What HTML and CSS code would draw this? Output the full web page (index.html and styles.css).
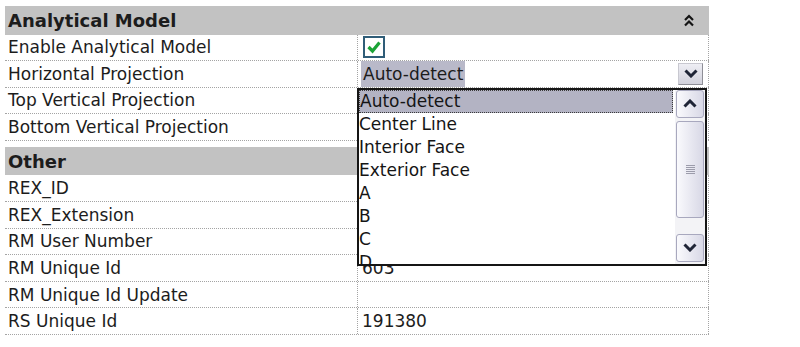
FILE: index.html
```html
<!DOCTYPE HTML>
<html>
	<head>
		<title>
			Properties
		</title>
		<meta name="viewport" content="width=device-width, initial-scale=1.0">
		<link rel="stylesheet" href="styles.css">
	</head>
	<body>
		<div class="grid">
			<!-- Analytical Model group -->
			<div class="group">
				<div class="groupHead">
					<span>Analytical Model</span>
					<svg class="collapse" width="10" height="13" viewBox="0 0 10 13">
						<polyline points="1,6 5,2 9,6" fill="none" stroke="#141414" stroke-width="2.2"/>
						<polyline points="1,11.5 5,7.5 9,11.5" fill="none" stroke="#141414" stroke-width="2.2"/>
					</svg>
				</div>
				<div class="row">
					<div class="name">Enable Analytical Model</div>
					<div class="value">
						<span class="check">
							<svg width="18" height="18" viewBox="0 0 18 18">
								<polyline points="3.5,9 7.5,13 14.5,4.5" fill="none" stroke="#1ba336" stroke-width="3.2"/>
							</svg>
						</span>
					</div>
				</div>
				<div class="row">
					<div class="name">Horizontal Projection</div>
					<div class="value combo">
						<span class="current">Auto-detect</span>
						<span class="dropBtn">
							<svg width="14" height="9" viewBox="0 0 14 9">
								<polyline points="1.5,1.5 7,7 12.5,1.5" fill="none" stroke="#1f2536" stroke-width="3"/>
							</svg>
						</span>
						<!-- open list of the combo -->
						<div class="dropList">
							<div class="items">
								<div class="item selected">Auto-detect</div>
								<div class="item">Center Line</div>
								<div class="item">Interior Face</div>
								<div class="item">Exterior Face</div>
								<div class="item">A</div>
								<div class="item">B</div>
								<div class="item">C</div>
								<div class="item">D</div>
							</div>
							<div class="scroll">
								<span class="sbtn">
									<svg width="14" height="9" viewBox="0 0 14 9">
										<polyline points="1.5,7.5 7,2 12.5,7.5" fill="none" stroke="#1f2536" stroke-width="3"/>
									</svg>
								</span>
								<span class="thumb">
									<span class="grip"></span>
								</span>
								<span class="track"></span>
								<span class="sbtn">
									<svg width="14" height="9" viewBox="0 0 14 9">
										<polyline points="1.5,1.5 7,7 12.5,1.5" fill="none" stroke="#1f2536" stroke-width="3"/>
									</svg>
								</span>
							</div>
						</div>
					</div>
				</div>
				<div class="row">
					<div class="name">Top Vertical Projection</div>
					<div class="value"></div>
				</div>
				<div class="row">
					<div class="name">Bottom Vertical Projection</div>
					<div class="value"></div>
				</div>
			</div>
			<!-- Other group -->
			<div class="group">
				<div class="groupHead">
					<span>Other</span>
				</div>
				<div class="row">
					<div class="name">REX_ID</div>
					<div class="value"></div>
				</div>
				<div class="row">
					<div class="name">REX_Extension</div>
					<div class="value"></div>
				</div>
				<div class="row">
					<div class="name">RM User Number</div>
					<div class="value"></div>
				</div>
				<div class="row">
					<div class="name">RM Unique Id</div>
					<div class="value">603</div>
				</div>
				<div class="row">
					<div class="name">RM Unique Id Update</div>
					<div class="value"></div>
				</div>
				<div class="row">
					<div class="name">RS Unique Id</div>
					<div class="value">191380</div>
				</div>
			</div>
		</div>
	</body>
</html>
```

FILE: styles.css
```css
body {
	margin:0;
	background-color:white;
	color:#1c1c1c;
	font-family:"DejaVu Sans", Tahoma, sans-serif;
	font-size:17px;
}

.grid {
	width:704px;
	margin-left:5px;
}
.group {
	margin-top:6px;
}
.groupHead {
	height:28.5px;
	box-sizing:border-box;
	padding:0 15px 0 3px;
	background-color:#c2c2c2;
	font-size:18px;
	font-weight:bold;
	display:flex;
	align-items:center;
	justify-content:space-between;
}
.collapse {
	display:block;
}

.row {
	height:26.6px;
	box-sizing:border-box;
	border-bottom:1px dotted #a4a4a4;
	display:flex;
}
.name {
	width:352px;
	padding-left:3px;
	box-sizing:border-box;
	display:flex;
	align-items:center;
	white-space:nowrap;
}
.value {
	flex:1;
	padding-left:4px;
	border-left:1px dotted #a4a4a4;
	border-right:1px dotted #a4a4a4;
	display:flex;
	align-items:center;
	position:relative;
	white-space:nowrap;
}

/* checkbox */
.check {
	width:22px;
	height:22px;
	box-sizing:border-box;
	margin-left:1px;
	border:2px solid #2f5d78;
	background-color:white;
	display:flex;
	align-items:center;
	justify-content:center;
}

/* combo box */
.combo {
	align-items:stretch;
	padding-left:3px;
}
.current {
	padding:0 2px;
	background-color:#b9b9c9;
	display:flex;
	align-items:center;
}
.dropBtn {
	width:25px;
	height:22px;
	box-sizing:border-box;
	margin:0 5px 0 auto;
	align-self:center;
	border:1px solid #c8c8d0;
	border-right-color:#8e8e96;
	border-bottom-color:#8e8e96;
	background:linear-gradient(#eeeef4, #d2d2dc);
	display:flex;
	align-items:center;
	justify-content:center;
}

.dropList {
	position:absolute;
	left:-1px;
	top:calc(100% + 1px);
	width:350px;
	height:178px;
	box-sizing:border-box;
	border:2px solid #151515;
	background-color:white;
	display:flex;
	z-index:2;
}
.items {
	flex:1;
	overflow:hidden;
	padding-right:2px;
}
.item {
	height:23px;
	line-height:23px;
	color:#151515;
}
.selected {
	line-height:21px;
	box-sizing:border-box;
	border:1px dotted #3a3a3a;
	background-color:#b3b3c3;
}

.scroll {
	width:30px;
	box-sizing:border-box;
	padding:0 1px 2px 1px;
	background-color:#f3f3f6;
	display:flex;
	flex-direction:column;
}
.sbtn {
	height:28px;
	box-sizing:border-box;
	border:1px solid #a8a8be;
	border-radius:3px;
	background:linear-gradient(to right, #fafafd, #d8d8e6);
	display:flex;
	align-items:center;
	justify-content:center;
}
.thumb {
	height:97px;
	margin-top:3px;
	box-sizing:border-box;
	border:1px solid #a8a8be;
	border-radius:3px;
	background:linear-gradient(to right, #fafafd, #d8d8e6);
	display:flex;
	align-items:center;
	justify-content:center;
}
.grip {
	width:9px;
	height:9px;
	background:repeating-linear-gradient(#9c9cab 0, #9c9cab 1px, transparent 1px, transparent 2px);
}
.track {
	flex:1;
}
```
